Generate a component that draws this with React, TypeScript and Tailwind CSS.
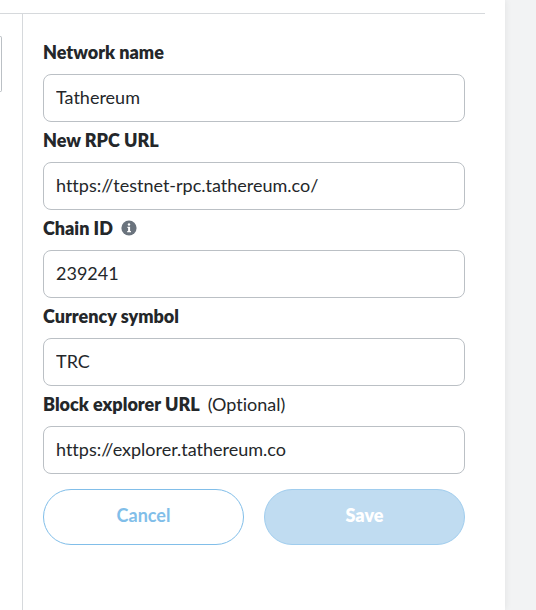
import { useState, type ReactNode } from "react";

type FieldProps = {
  id: string;
  label: string;
  initial: string;
  children?: ReactNode;
};

function InfoIcon() {
  return (
    <svg viewBox="0 0 16 16" className="size-4 text-[#6a737d]" role="img" aria-label="Info">
      <circle cx="8" cy="8" r="7.6" fill="currentColor" />
      <circle cx="8" cy="4.5" r="1.2" fill="#fff" />
      <path d="M6.4 6.7h2.7v4.2h.9v1.3H6.2v-1.3h.9V8h-.7z" fill="#fff" />
    </svg>
  );
}

function Field({ id, label, initial, children }: FieldProps) {
  const [value, setValue] = useState(initial);

  return (
    <div>
      <div className="flex h-10 items-center gap-2 pb-1 text-lg leading-6">
        <label htmlFor={id} className="font-extrabold">
          {label}
        </label>
        {children}
      </div>
      <input
        id={id}
        type="text"
        value={value}
        onChange={(e) => setValue(e.target.value)}
        className="block h-12 w-full rounded-lg border border-[#bbc0c5] bg-white px-3 pb-0.5 text-lg outline-none focus:border-[#037dd6]"
      />
    </div>
  );
}

export default function App() {
  return (
    <div className="flex min-h-screen bg-[#f2f3f4] font-['Lato',sans-serif] text-[#24272a] [font-variant-ligatures:none]">
      <main className="flex flex-1 flex-col bg-white shadow-[0_0_7px_rgba(0,0,0,0.08)]">
        <div className="mr-5 h-3.5 border-b border-[#d6d9dc]" />

        <div className="flex flex-1">
          {/* Networks list, only the edge of its search box shows */}
          <div className="w-[23px] shrink-0 border-r border-[#d6d9dc] pt-[22px]">
            <div className="h-14 w-0.5 rounded-r-lg border border-l-0 border-[#bbc0c5]" />
          </div>

          <form className="flex-1 pt-5 pr-10 pl-5" onSubmit={(e) => e.preventDefault()}>
            <Field id="network-name" label="Network name" initial="Tathereum" />
            <Field id="rpc-url" label="New RPC URL" initial="https://testnet-rpc.tathereum.co/" />
            <Field id="chain-id" label="Chain ID" initial="239241">
              <InfoIcon />
            </Field>
            <Field id="symbol" label="Currency symbol" initial="TRC" />
            <Field id="explorer" label="Block explorer URL" initial="https://explorer.tathereum.co">
              <span>(Optional)</span>
            </Field>

            <div className="mt-[15px] grid grid-cols-2 gap-5">
              <button
                type="button"
                className="h-14 rounded-full border border-[#81bee9] pb-1 text-lg font-bold text-[#81bee9]"
              >
                Cancel
              </button>
              <button
                type="submit"
                className="h-14 rounded-full border border-[#a0cdee] bg-[#c0dcf1] pb-1 text-lg font-extrabold text-white"
              >
                Save
              </button>
            </div>
          </form>
        </div>
      </main>
      <div className="w-[31px] shrink-0" />
    </div>
  );
}
